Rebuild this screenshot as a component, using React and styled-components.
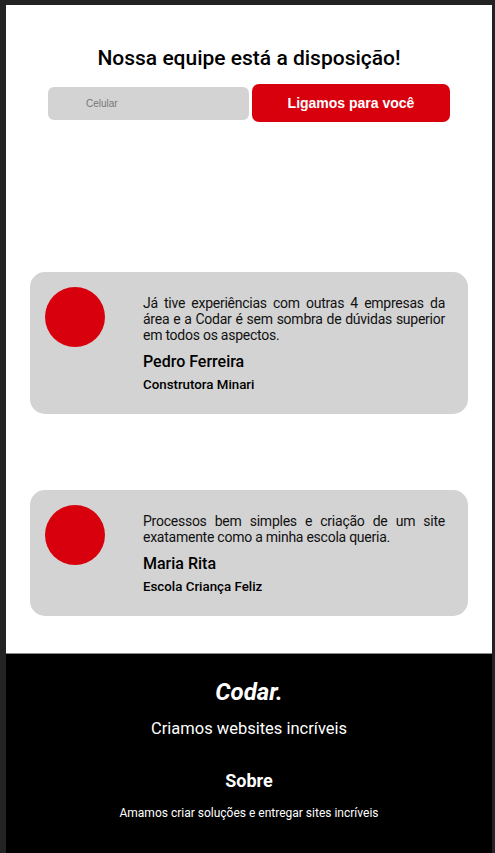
import React from 'react';
import styled, { createGlobalStyle } from 'styled-components';

const GlobalStyle = createGlobalStyle`
  * { box-sizing: border-box; }
  body {
    margin: 0;
    background: #232323;
    font-family: Roboto, "Liberation Sans", Arial, sans-serif;
  }
`;

const testimonials = [
  {
    quote: 'Já tive experiências com outras 4 empresas da área e a Codar é sem sombra de dúvidas superior em todos os aspectos.',
    name: 'Pedro Ferreira',
    company: 'Construtora Minari',
  },
  {
    quote: 'Processos bem simples e criação de um site exatamente como a minha escola queria.',
    name: 'Maria Rita',
    company: 'Escola Criança Feliz',
  },
];

function App() {
  return (
    <Frame>
      <GlobalStyle />
      <Page>
        <Contact>
          <Title>Nossa equipe está a disposição!</Title>
          <Form onSubmit={e => e.preventDefault()}>
            <Input type="tel" placeholder="Celular" />
            <Button type="submit">Ligamos para você</Button>
          </Form>
        </Contact>
        <Testimonials>
          {testimonials.map(item => (
            <Card key={item.name}>
              <Avatar />
              <CardText>
                <Quote>{item.quote}</Quote>
                <Name>{item.name}</Name>
                <Company>{item.company}</Company>
              </CardText>
            </Card>
          ))}
        </Testimonials>
        <Footer>
          <Logo>Codar.</Logo>
          <Slogan>Criamos websites incríveis</Slogan>
          <FooterTitle>Sobre</FooterTitle>
          <FooterText>Amamos criar soluções e entregar sites incríveis</FooterText>
        </Footer>
      </Page>
    </Frame>
  );
}

export default App;

const Frame = styled.div`
  padding: 5px 3px 0 6px;
  min-height: 100vh;
`;

const Page = styled.main`
  background: #fff;
`;

const Contact = styled.section`
  padding-top: 41px;
  display: flex;
  flex-direction: column;
  align-items: center;
`;

const Title = styled.h2`
  margin: 0 0 14px;
  font-size: 21px;
  line-height: 24px;
  font-weight: 500;
  color: #000;
`;

const Form = styled.form`
  display: flex;
  align-items: center;
  gap: 3px;
`;

const Input = styled.input`
  width: 201px;
  height: 33px;
  border: none;
  border-radius: 6px;
  background: #d3d3d3;
  padding: 0 0 0 38px;
  font-family: "Liberation Sans", Arial, sans-serif;
  font-size: 10px;
  outline: none;
  &::placeholder { color: #777; }
`;

const Button = styled.button`
  width: 198px;
  height: 38px;
  border: none;
  border-radius: 7px;
  background: #d9000e;
  color: #fff;
  font-family: "Liberation Sans", Arial, sans-serif;
  font-size: 14px;
  font-weight: 700;
  cursor: pointer;
`;

const Testimonials = styled.section`
  padding: 150px 0 37px;
  display: flex;
  flex-direction: column;
  align-items: center;
  gap: 76px;
`;

const Card = styled.article`
  width: 438px;
  display: flex;
  align-items: flex-start;
  gap: 38px;
  padding: 15px 23px 15px 15px;
  background: #d3d3d3;
  border-radius: 15px;
`;

const Avatar = styled.div`
  flex: 0 0 60px;
  height: 60px;
  border-radius: 50%;
  background: #d9000e;
`;

const CardText = styled.div`
  flex: 1;
  padding: 8px 0 6px;
  color: #111;
`;

const Quote = styled.p`
  margin: 0 0 8px;
  font-size: 14px;
  line-height: 16px;
  font-weight: 400;
  letter-spacing: -0.25px;
  text-align: justify;
`;

const Name = styled.h3`
  margin: 0 0 4px;
  font-size: 16px;
  line-height: 21px;
  font-weight: 500;
  color: #000;
`;

const Company = styled.h4`
  margin: 0;
  font-size: 13.3px;
  line-height: 17px;
  font-weight: 500;
  color: #000;
`;

const Footer = styled.footer`
  background: #000;
  border-top: 1px solid #8a8a8a;
  color: #fff;
  text-align: center;
  padding: 23px 0 60px;
`;

const Logo = styled.h1`
  margin: 0 0 12px;
  font-size: 24px;
  line-height: 30px;
  font-style: italic;
  font-weight: 700;
`;

const Slogan = styled.p`
  margin: 0 0 31px;
  font-size: 16.5px;
  line-height: 20px;
`;

const FooterTitle = styled.h3`
  margin: 0 0 15px;
  font-size: 18px;
  line-height: 21px;
  font-weight: 700;
`;

const FooterText = styled.p`
  margin: 0;
  font-size: 12px;
  line-height: 14px;
`;
